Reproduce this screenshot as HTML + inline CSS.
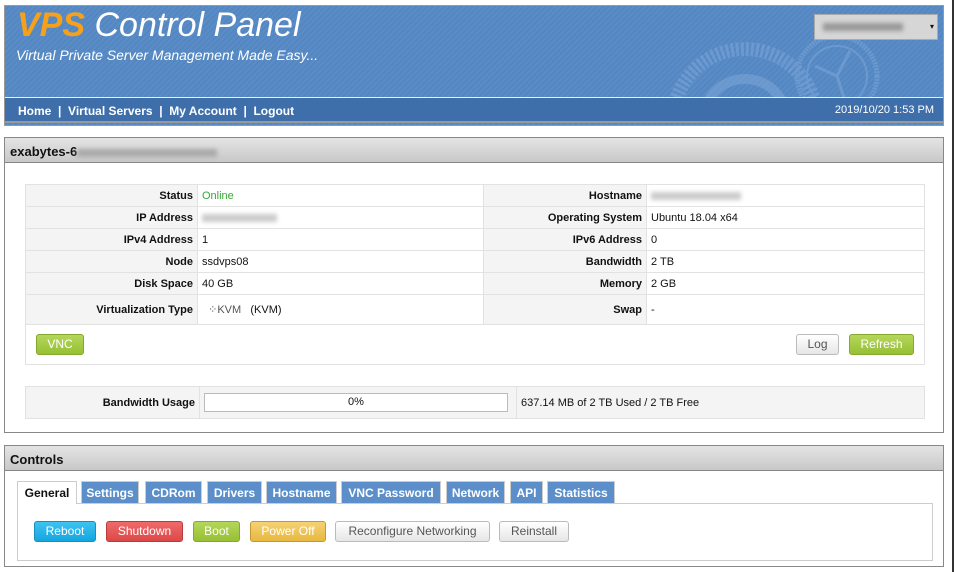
<!DOCTYPE html>
<html><head><meta charset="utf-8"><style>
*{box-sizing:border-box}
body{margin:0;width:957px;height:572px;overflow:hidden;background:#fff;font-family:"Liberation Sans",sans-serif;font-size:11px;color:#111;position:relative}
.abs{position:absolute}
#hdr{left:4px;top:5px;width:940px;height:121px;border:1px solid #999;background:repeating-linear-gradient(135deg,#5a8cc6 0 2px,#5487c2 2px 4px)}
#nav{left:0;top:91px;width:938px;height:26px;background:#3f6faa;border-top:1px solid #e8f0f8;border-bottom:2px solid #999;color:#fff;font-weight:bold;font-size:12px}
.panel{left:4px;width:940px;border:1px solid #888;background:#fff}
.ph{height:25px;background:linear-gradient(#e4e4e4,#c8c8c8);border-bottom:1px solid #888;font-weight:bold;font-size:13px;padding:6px 5px}
table{border-collapse:collapse;position:absolute}
td{border:1px solid #e2e2e2;height:22px;padding:0 4px;font-size:11px}
td.l{background:#f4f4f4;text-align:right;font-weight:bold}
.btn{position:absolute;height:21px;border-radius:3px;font-size:12px;text-align:center;line-height:19px;color:#fff}
.g{background:linear-gradient(#b4d65a,#97c034);border:1px solid #84a830}
.w{background:linear-gradient(#fff,#e6e6e6);border:1px solid #bbb;color:#555}
.tab{position:absolute;top:481px;height:22px;background:#5c8fca;border:1px solid #ccc;border-bottom:none;color:#fff;font-weight:bold;font-size:12px;line-height:22px;text-align:center}
.blur{display:inline-block;background:#ccc;filter:blur(2px);height:8px;vertical-align:middle}
</style></head><body>
<div class="abs" style="left:952px;top:0;width:2px;height:572px;background:#333"></div>
<div id="hdr" class="abs">
<svg class="abs" style="left:640px;top:20px" width="240" height="71" viewBox="0 0 240 71"><g fill="none" stroke="#7aa4d6" opacity=".6"><circle cx="100" cy="95" r="72" stroke-width="14" stroke-dasharray="3 2"/><circle cx="100" cy="95" r="42" stroke-width="10"/><circle cx="192" cy="50" r="40" stroke-width="5" stroke-dasharray="2 1"/><circle cx="192" cy="50" r="30" stroke-width="2"/><path d="M192 50L170 40M192 50L205 25M192 50L200 75" stroke-width="3"/></g></svg>
<div class="abs" style="left:12px;top:0;font-size:34px;font-style:italic;color:#fff;white-space:nowrap"><b style="color:#f7a11a">VPS</b> Control Panel</div>
<div class="abs" style="left:11px;top:41px;font-size:14px;font-style:italic;color:#fff">Virtual Private Server Management Made Easy...</div>
<div class="abs" style="left:809px;top:8px;width:124px;height:26px;background:#d6d6d6;border:1px solid #aaa"><span class="blur" style="width:80px;margin:8px 0 0 8px;background:#999"></span><span style="position:absolute;right:3px;top:7px;font-size:8px">▾</span></div>
<div id="nav" class="abs"><span class="abs" style="left:13px;top:6px">Home &nbsp;| &nbsp;Virtual Servers &nbsp;| &nbsp;My Account &nbsp;| &nbsp;Logout</span><span class="abs" style="right:9px;top:6px;font-weight:normal;font-size:11px">2019/10/20 1:53 PM</span></div>
</div>
<div class="abs panel" style="top:137px;height:296px"><div class="ph">exabytes-6<span class="blur" style="width:140px;background:#aaa"></span></div></div>
<table style="left:25px;top:184px;width:900px">
<tr><td class="l" style="width:172px">Status</td><td style="width:286px;color:#3a3">Online</td><td class="l" style="width:163px">Hostname</td><td><span class="blur" style="width:90px"></span></td></tr>
<tr><td class="l">IP Address</td><td><span class="blur" style="width:75px"></span></td><td class="l">Operating System</td><td>Ubuntu 18.04 x64</td></tr>
<tr><td class="l">IPv4 Address</td><td>1</td><td class="l">IPv6 Address</td><td>0</td></tr>
<tr><td class="l">Node</td><td>ssdvps08</td><td class="l">Bandwidth</td><td>2 TB</td></tr>
<tr><td class="l">Disk Space</td><td>40 GB</td><td class="l">Memory</td><td>2 GB</td></tr>
<tr><td class="l" style="height:30px">Virtualization Type</td><td>&nbsp; <span style="color:#555">⁘KVM</span> &nbsp; (KVM)</td><td class="l">Swap</td><td>-</td></tr>
<tr><td colspan="4" style="height:40px;border-color:#e2e2e2"></td></tr>
</table>
<div class="btn g" style="left:36px;top:334px;width:48px">VNC</div>
<div class="btn w" style="left:796px;top:334px;width:43px">Log</div>
<div class="btn g" style="left:849px;top:334px;width:65px">Refresh</div>
<table style="left:25px;top:386px;width:900px">
<tr><td class="l" style="width:174px;height:32px">Bandwidth Usage</td><td style="width:317px;background:#f4f4f4;padding-right:8px"><div style="height:19px;border:1px solid #bbb;background:#fff;text-align:center;line-height:16px">0%</div></td><td style="background:#f4f4f4">637.14 MB of 2 TB Used / 2 TB Free</td></tr>
</table>
<div class="abs panel" style="top:445px;height:122px"><div class="ph">Controls</div></div>
<div class="abs" style="left:17px;top:503px;width:916px;height:58px;border:1px solid #ccc"></div>
<div class="tab" style="left:17px;width:60px;background:#fff;color:#111;height:23px">General</div>
<div class="tab" style="left:81px;width:58px">Settings</div>
<div class="tab" style="left:145px;width:57px">CDRom</div>
<div class="tab" style="left:207px;width:55px">Drivers</div>
<div class="tab" style="left:266px;width:71px">Hostname</div>
<div class="tab" style="left:341px;width:100px">VNC Password</div>
<div class="tab" style="left:446px;width:59px">Network</div>
<div class="tab" style="left:510px;width:33px">API</div>
<div class="tab" style="left:547px;width:68px">Statistics</div>
<div class="btn" style="left:34px;top:521px;width:62px;background:linear-gradient(#3ec3f0,#14a6e0);border:1px solid #1a8cc0">Reboot</div>
<div class="btn" style="left:106px;top:521px;width:77px;background:linear-gradient(#f06a6a,#dc4848);border:1px solid #b83a3a">Shutdown</div>
<div class="btn g" style="left:193px;top:521px;width:47px">Boot</div>
<div class="btn" style="left:250px;top:521px;width:76px;background:linear-gradient(#f4d274,#e8b840);border:1px solid #c49a30">Power Off</div>
<div class="btn w" style="left:335px;top:521px;width:155px">Reconfigure Networking</div>
<div class="btn w" style="left:499px;top:521px;width:70px">Reinstall</div>
</body></html>
